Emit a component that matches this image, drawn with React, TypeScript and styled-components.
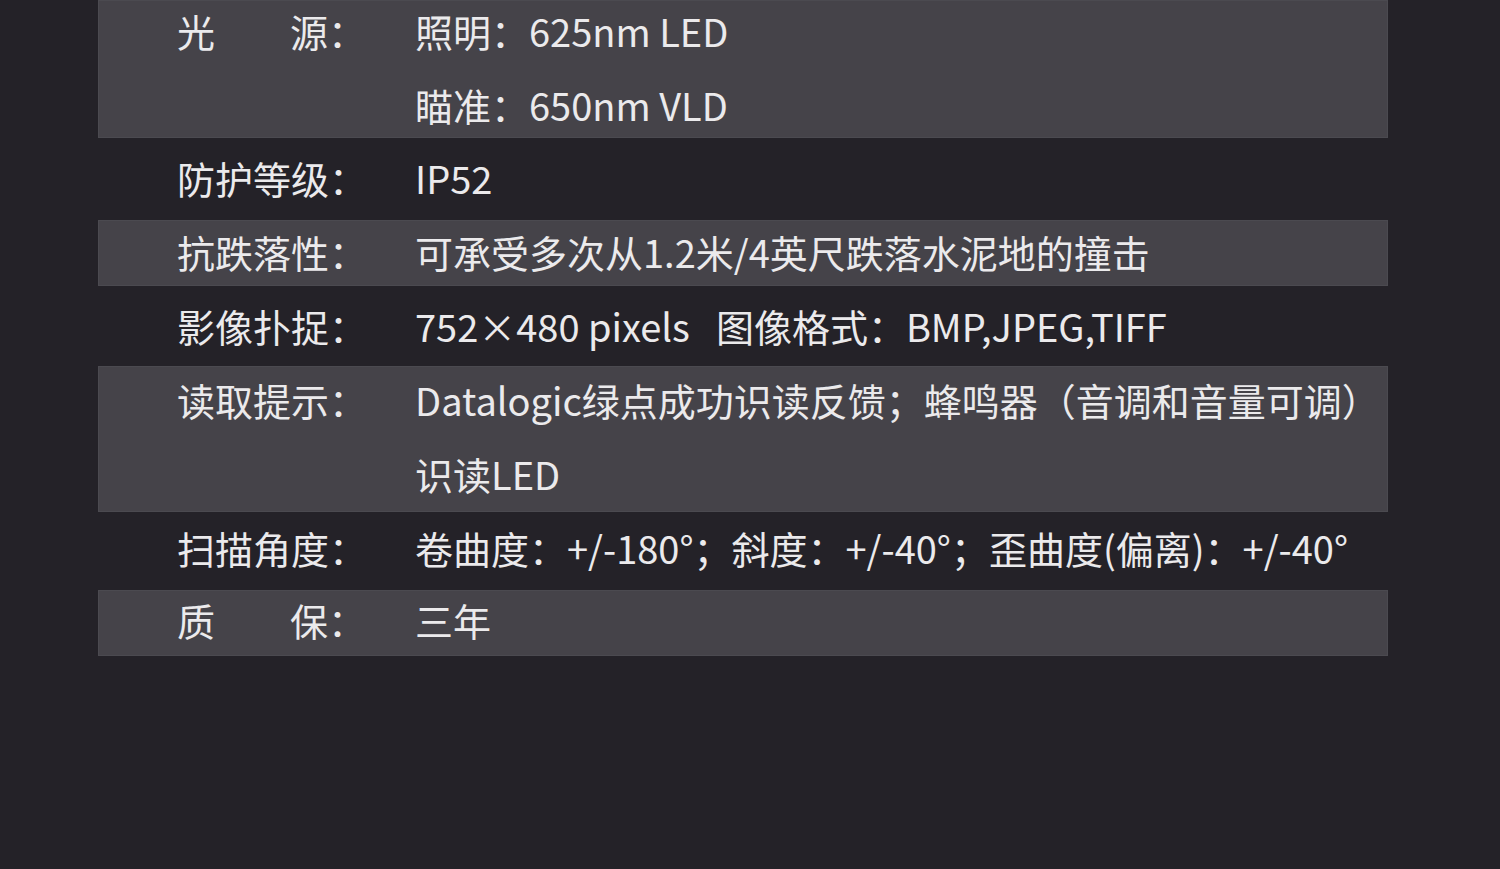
import styled, { createGlobalStyle } from 'styled-components'

const GlobalStyle = createGlobalStyle`
  html, body {
    margin: 0;
    padding: 0;
    background: #242228;
  }
  * {
    box-sizing: border-box;
  }
`

type Spec = {
  label: string[]
  lines: string[][]
  light: boolean
  h: number
  pt: number
}

// each line may be split in parts; a wide gap goes between the parts
const specs: Spec[] = [
  { label: ['光', '源：'], lines: [['照明：625nm LED'], ['瞄准：650nm VLD']], light: true, h: 138, pt: 12 },
  { label: ['防护等级：'], lines: [['IP52']], light: false, h: 82, pt: 21 },
  { label: ['抗跌落性：'], lines: [['可承受多次从1.2米/4英尺跌落水泥地的撞击']], light: true, h: 66, pt: 13 },
  { label: ['影像扑捉：'], lines: [['752×480 pixels', '图像格式：BMP,JPEG,TIFF']], light: false, h: 80, pt: 21 },
  {
    label: ['读取提示：'],
    lines: [['Datalogic绿点成功识读反馈；蜂鸣器（音调和音量可调）'], ['识读LED']],
    light: true,
    h: 146,
    pt: 15,
  },
  {
    label: ['扫描角度：'],
    lines: [['卷曲度：+/-180°；斜度：+/-40°；歪曲度(偏离)：+/-40°']],
    light: false,
    h: 78,
    pt: 17,
  },
  { label: ['质', '保：'], lines: [['三年']], light: true, h: 66, pt: 11 },
]

function App() {
  return (
    <>
      <GlobalStyle />
      <Page>
        <SpecTable>
          {specs.map((s, i) => (
            <Row key={i} $light={s.light} $h={s.h} $pt={s.pt}>
              <Label>
                {s.label.map((t, j) => (
                  <span key={j}>{t}</span>
                ))}
              </Label>
              <Value>
                {s.lines.map((parts, j) => (
                  <Line key={j}>
                    {parts.map((t, k) => (
                      <Part key={k}>{t}</Part>
                    ))}
                  </Line>
                ))}
              </Value>
            </Row>
          ))}
        </SpecTable>
      </Page>
    </>
  )
}

export default App

const Page = styled.main`
  width: 1500px;
  height: 869px;
  background: #242228;
  padding: 0 112px 0 98px;
  overflow: hidden;
  font-family: 'Noto Sans CJK SC', 'Noto Sans', sans-serif;
  font-size: 38px;
  color: #ebeaec;
`

const SpecTable = styled.section`
  display: flex;
  flex-direction: column;
  width: 1290px;
`

const Row = styled.div<{ $light: boolean; $h: number; $pt: number }>`
  display: grid;
  grid-template-columns: 238px 1fr;
  height: ${(p) => p.$h}px;
  padding: ${(p) => p.$pt}px 0 0 79px;
  background: ${(p) => (p.$light ? '#454349' : 'transparent')};
  box-shadow: ${(p) => (p.$light ? 'inset 0 0 0 1px #4b4a50' : 'none')};
`

const Label = styled.div`
  display: flex;
  justify-content: space-between;
  width: 189px;
  height: 38px;
  line-height: 38px;
  white-space: nowrap;
`

const Value = styled.div`
  display: flex;
  flex-direction: column;
  gap: 35.5px;
`

const Line = styled.div`
  display: flex;
  gap: 26px;
  line-height: 38px;
  white-space: nowrap;
`

const Part = styled.span`
  margin: 0;
`
